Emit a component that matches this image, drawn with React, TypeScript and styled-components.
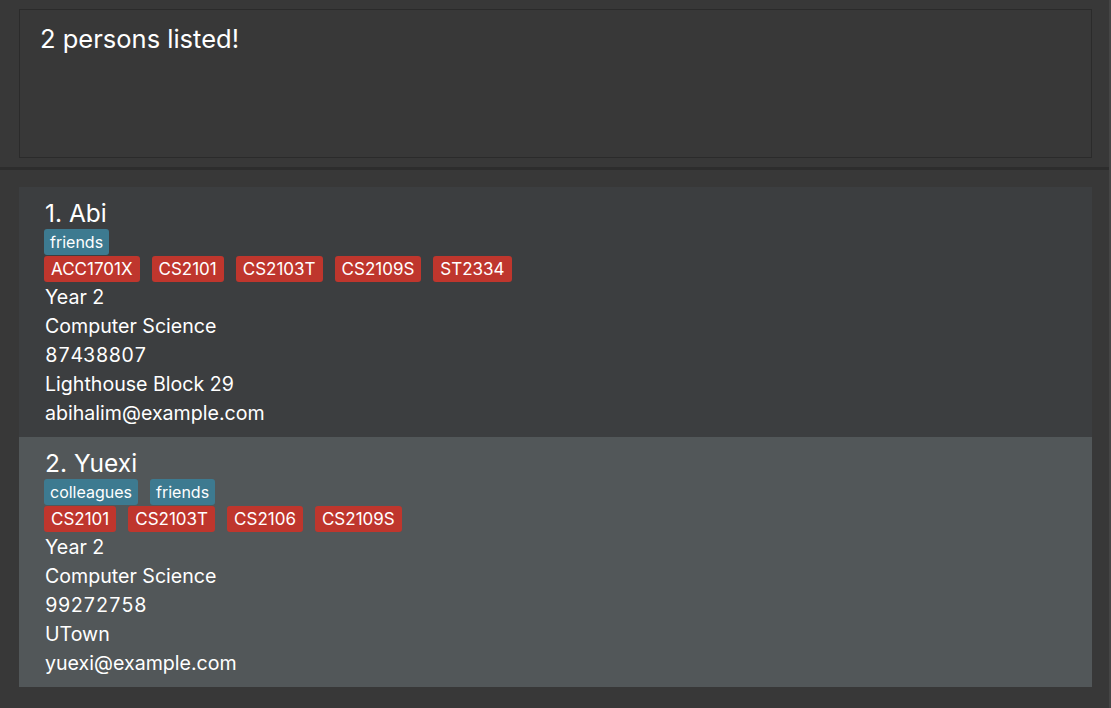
import React from 'react';
import styled, { createGlobalStyle } from 'styled-components';

const GlobalStyle = createGlobalStyle`
  html, body {
    margin: 0;
    padding: 0;
    background: #383838;
  }
  body {
    font-family: Inter, "Noto Sans", "Liberation Sans", sans-serif;
  }
`;

const Window = styled.div`
  width: 1111px;
  height: 708px;
  box-sizing: border-box;
  background: #383838;
  border-right: 2px solid #454545;
  display: flex;
  flex-direction: column;
  overflow: hidden;
`;

const ResultPanel = styled.div`
  padding: 9px 17px 9px 19px;
  border-bottom: 3px solid #2d2d2d;
`;

const ResultBox = styled.div`
  height: 149px;
  box-sizing: border-box;
  border: 1px solid #2b2b2b;
  background: #383838;
  padding: 12px 20px;
  color: #ffffff;
  font-size: 25.5px;
  line-height: 34px;
`;

const ListPanel = styled.div`
  flex: 1;
  padding: 17px 17px 0 19px;
  display: flex;
  flex-direction: column;
`;

const Card = styled.div<{ $odd: boolean }>`
  height: 250px;
  box-sizing: border-box;
  background: ${(p) => (p.$odd ? '#525759' : '#3c3e40')};
  padding: 11px 26px 0 26px;
  display: flex;
  flex-direction: column;
`;

const Name = styled.div`
  color: #ffffff;
  font-size: 24.5px;
  line-height: 31px;
`;

const TagRow = styled.div`
  display: flex;
  gap: 12px;
  margin-bottom: 1px;
  margin-left: -1px;
`;

const Tag = styled.span<{ $kind: 'label' | 'module' }>`
  display: inline-block;
  height: 26px;
  line-height: 26px;
  padding: 0 ${(p) => (p.$kind === 'label' ? '6px' : '7px')};
  border-radius: 3px;
  font-size: ${(p) => (p.$kind === 'label' ? '16px' : '17px')};
  color: #ffffff;
  background: ${(p) => (p.$kind === 'label' ? '#3d7a90' : '#bf362d')};
`;

const Detail = styled.div<{ $numeric?: boolean }>`
  color: #ffffff;
  font-size: 19.6px;
  line-height: 29px;
  font-variant-numeric: ${(p) => (p.$numeric ? 'tabular-nums' : 'normal')};
`;

interface Person {
  name: string;
  labels: string[];
  modules: string[];
  year: string;
  major: string;
  phone: string;
  address: string;
  email: string;
}

const persons: Person[] = [
  {
    name: 'Abi',
    labels: ['friends'],
    modules: ['ACC1701X', 'CS2101', 'CS2103T', 'CS2109S', 'ST2334'],
    year: 'Year 2',
    major: 'Computer Science',
    phone: '87438807',
    address: 'Lighthouse Block 29',
    email: 'abihalim@example.com',
  },
  {
    name: 'Yuexi',
    labels: ['colleagues', 'friends'],
    modules: ['CS2101', 'CS2103T', 'CS2106', 'CS2109S'],
    year: 'Year 2',
    major: 'Computer Science',
    phone: '99272758',
    address: 'UTown',
    email: 'yuexi@example.com',
  },
];

const PersonCard: React.FC<{ person: Person; index: number }> = ({ person, index }) => (
  <Card $odd={index % 2 === 1}>
    <Name>
      {index + 1}. {person.name}
    </Name>
    <TagRow>
      {person.labels.map((l) => (
        <Tag key={l} $kind="label">{l}</Tag>
      ))}
    </TagRow>
    <TagRow>
      {person.modules.map((m) => (
        <Tag key={m} $kind="module">{m}</Tag>
      ))}
    </TagRow>
    <Detail>{person.year}</Detail>
    <Detail>{person.major}</Detail>
    <Detail $numeric>{person.phone}</Detail>
    <Detail>{person.address}</Detail>
    <Detail>{person.email}</Detail>
  </Card>
);

export default function App() {
  return (
    <>
      <GlobalStyle />
      <Window>
        <ResultPanel>
          <ResultBox>{persons.length} persons listed!</ResultBox>
        </ResultPanel>
        <ListPanel>
          {persons.map((p, i) => (
            <PersonCard key={p.name} person={p} index={i} />
          ))}
        </ListPanel>
      </Window>
    </>
  );
}
